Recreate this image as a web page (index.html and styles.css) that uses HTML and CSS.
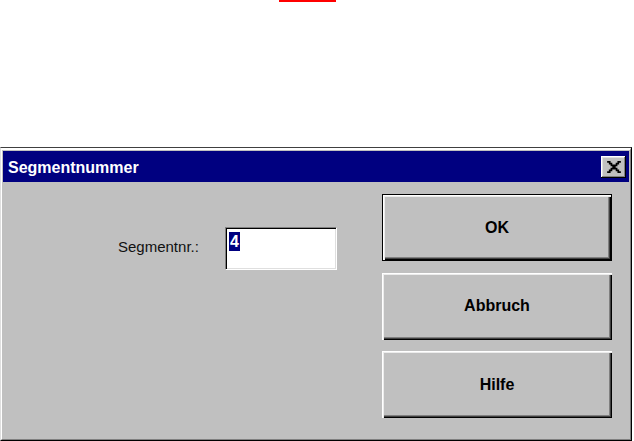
FILE: index.html
```html
<!DOCTYPE html>
<html lang="de">

<head>
    <meta charset="UTF-8">
    <meta name="viewport" content="width=device-width, initial-scale=1.0">
    <title>Segmentnummer</title>
    <link rel="stylesheet" href="styles.css">
</head>

<body>
    <div class="marker"></div>
    <div class="dialog">
        <div class="frame">
            <div class="titlebar">
                <span class="title">Segmentnummer</span>
                <button class="close" aria-label="Schließen">
                    <svg width="14" height="12" viewBox="0 0 8 7">
                        <path fill="#000" d="M0 0h2v1H0z M6 0h2v1H6z M1 1h2v1H1z M5 1h2v1H5z M2 2h4v1H2z M3 3h2v1H3z M2 4h4v1H2z M1 5h2v1H1z M5 5h2v1H5z M0 6h2v1H0z M6 6h2v1H6z" />
                    </svg>
                </button>
            </div>
            <div class="content">
                <div class="field">
                    <label class="field_label" for="segment">Segmentnr.:</label>
                    <div class="field_input" id="segment"><span class="selected">4</span></div>
                </div>
                <div class="buttons">
                    <button class="btn btn_default">OK</button>
                    <button class="btn">Abbruch</button>
                    <button class="btn">Hilfe</button>
                </div>
            </div>
        </div>
    </div>
</body>

</html>
```

FILE: styles.css
```css
body {
    margin: 0;
    width: 634px;
    height: 441px;
    overflow: hidden;
    background-color: #fff;
    font-family: "Liberation Sans", Arial, sans-serif;
}

.marker {
    margin-left: 279px;
    width: 57px;
    height: 2px;
    background-color: #ff0000;
}

.dialog {
    margin-top: 145px;
    width: 632px;
    height: 294px;
    box-sizing: border-box;
    border-top: 1px solid #404040;
    border-left: 1px solid #dfdfdf;
    border-right: 1px solid #000;
    border-bottom: 1px solid #000;
}

.frame {
    height: 100%;
    box-sizing: border-box;
    padding: 1px;
    border-top: 2px solid #fff;
    border-left: 1px solid #fff;
    border-right: 1px solid #808080;
    border-bottom: 1px solid #808080;
    background-color: #c0c0c0;
    display: flex;
    flex-direction: column;
}

.titlebar {
    height: 31px;
    background-color: #000080;
    display: flex;
    align-items: center;
    justify-content: space-between;
    padding-left: 5px;
    padding-right: 3px;
}

.title {
    color: #fff;
    font-weight: bold;
    font-size: 16px;
    padding-top: 2px;
    line-height: 29px;
}

.close {
    width: 25px;
    height: 22px;
    padding: 0;
    border: 0;
    background-color: #c0c0c0;
    box-shadow: inset -1px -1px #000, inset 1px 1px #fff, inset -2px -2px #808080, inset 2px 2px #dfdfdf;
    display: flex;
    align-items: center;
    justify-content: center;
}

.content {
    flex: 1;
    display: flex;
    justify-content: space-between;
    padding: 12px 17px 0 115px;
}

.field {
    display: flex;
    align-items: flex-start;
    margin-top: 33px;
}

.field_label {
    width: 107px;
    margin-top: 11px;
    font-size: 15px;
    line-height: 17px;
    color: #111;
}

.field_input {
    width: 112px;
    height: 43px;
    box-sizing: border-box;
    padding: 4px 3px;
    background-color: #fff;
    border: 1px solid;
    border-color: #808080 #fff #fff #808080;
    box-shadow: inset 1px 1px #000, inset -1px -1px #dfdfdf;
}

.selected {
    display: inline-block;
    padding: 0 1px;
    line-height: 19px;
    font-size: 16px;
    font-weight: bold;
    color: #fff;
    background-color: #000080;
}

.buttons {
    display: flex;
    flex-direction: column;
    gap: 11.5px;
}

.btn {
    width: 230px;
    height: 67px;
    padding: 0;
    border: 0;
    background-color: #c0c0c0;
    box-shadow: inset 1px 1px #fff, inset 2px 2px #ececec, inset -1px -1px #000, inset -2px -2px #404040, inset -3px -3px #808080;
    font-family: "Liberation Sans", Arial, sans-serif;
    font-size: 16px;
    font-weight: bold;
    color: #000;
}

.btn_default {
    border: 1px solid #000;
}
```
